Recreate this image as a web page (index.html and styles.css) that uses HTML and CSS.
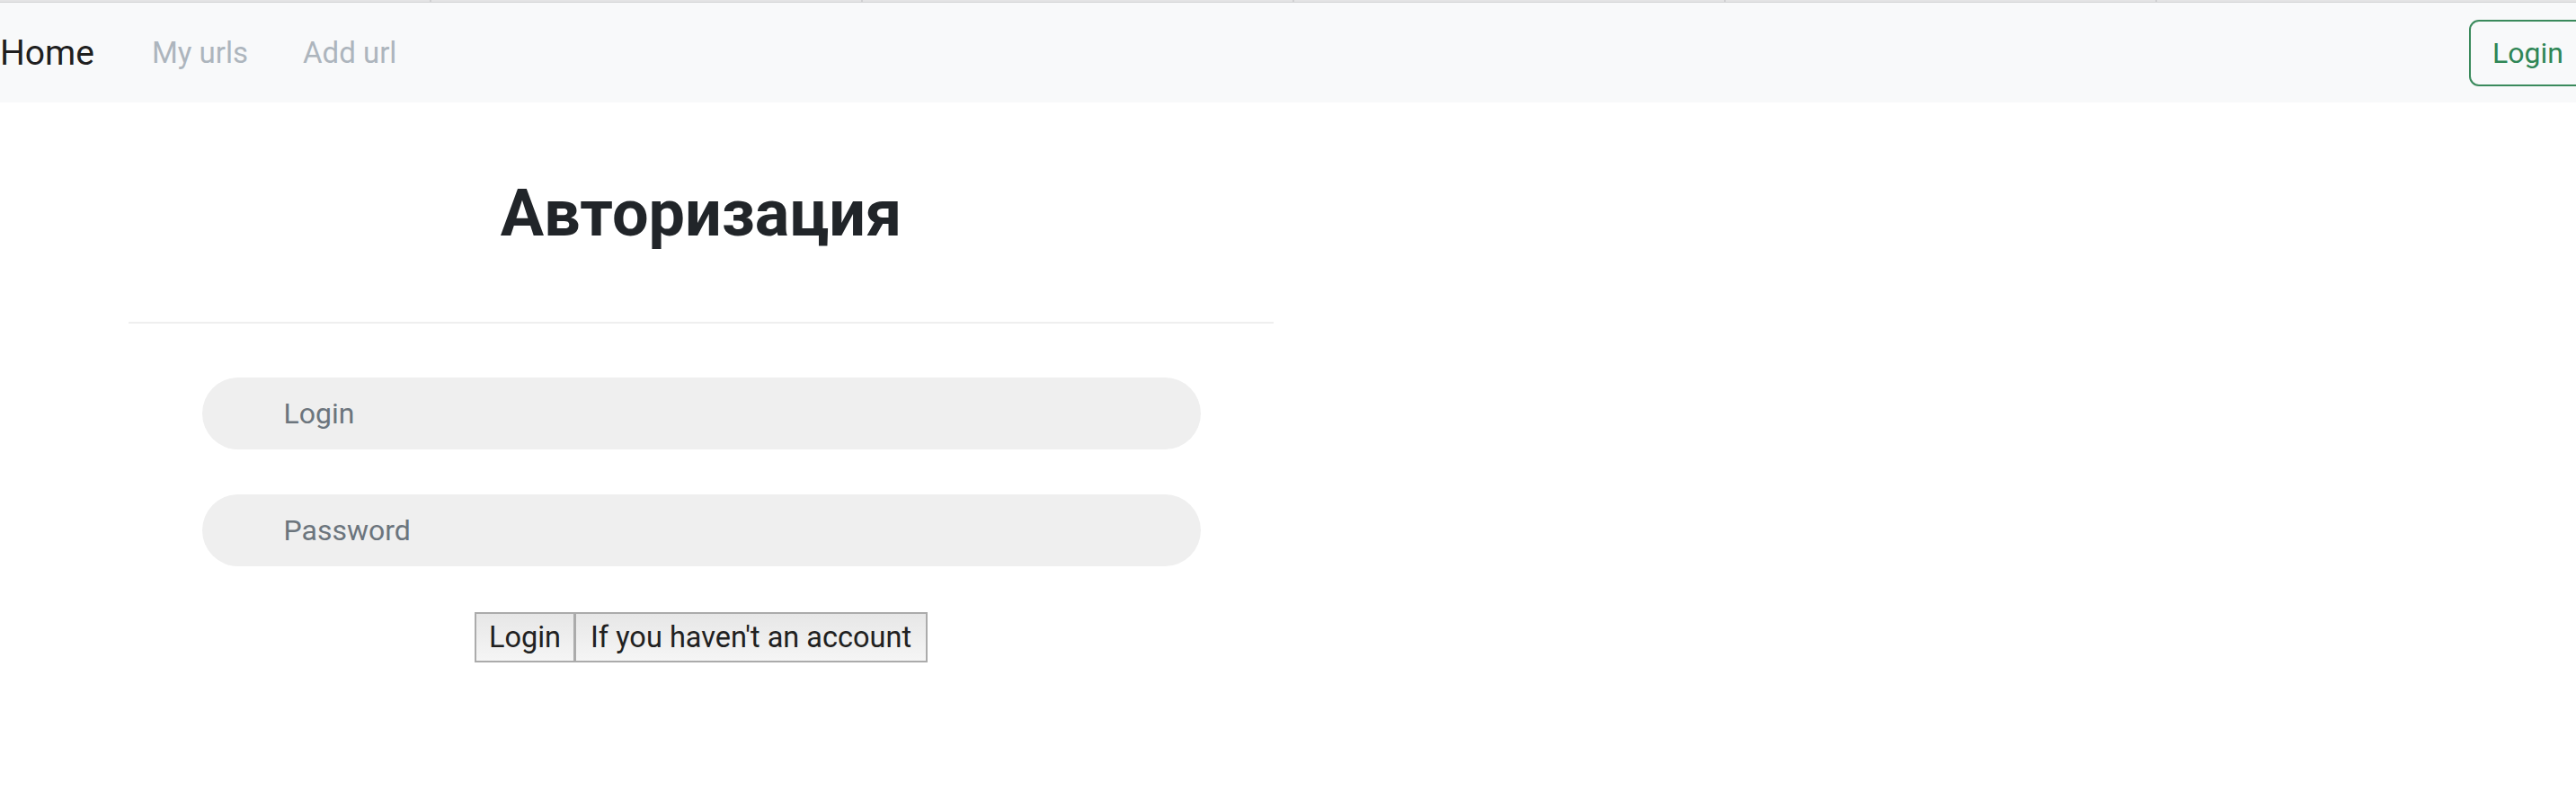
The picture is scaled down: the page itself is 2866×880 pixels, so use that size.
FILE: index.html
```html
<!DOCTYPE html>
<html lang="ru">
<head>
<meta charset="utf-8">
<title>Авторизация</title>
<link rel="stylesheet" href="styles.css">
</head>
<body>
<div class="tabstrip">
  <span class="tab"></span><span class="tab"></span><span class="tab"></span><span class="tab"></span><span class="tab"></span><span class="tab"></span>
</div>
<nav class="navbar">
  <a class="brand" href="#">Home</a>
  <a class="nav-link" href="#">My urls</a>
  <a class="nav-link" href="#">Add url</a>
  <button class="btn-outline" type="button">Login</button>
</nav>
<main class="auth">
  <h1 class="title">Авторизация</h1>
  <hr class="rule">
  <form class="form">
    <input class="field" type="text" placeholder="Login">
    <input class="field" type="password" placeholder="Password">
    <div class="actions"><button class="btn" type="submit">Login</button><button class="btn" type="button">If you haven't an account</button></div>
  </form>
</main>
</body>
</html>
```

FILE: styles.css
```css
html, body {
  margin: 0;
  padding: 0;
  background: #fff;
  font-family: Roboto, "Liberation Sans", Arial, sans-serif;
  color: #212529;
}

.tabstrip {
  display: flex;
  height: 2px;
  background: #e4e4e5;
  border-bottom: 1px solid #d3d3d5;
  overflow: hidden;
}

.tab {
  flex: 0 0 478px;
  border-right: 2px solid #d0d0d2;
}

.navbar {
  display: flex;
  align-items: center;
  height: 111px;
  background: #f8f9fa;
  overflow: hidden;
}

.brand {
  font-size: 39px;
  color: rgba(0, 0, 0, 0.9);
  text-decoration: none;
  margin-right: 64px;
}

.nav-link {
  font-size: 33px;
  color: #adb5bd;
  text-decoration: none;
  margin-right: 61px;
}

.btn-outline {
  margin-left: auto;
  margin-right: -12px;
  height: 74px;
  padding: 0 24px;
  font-family: inherit;
  font-size: 32px;
  color: #2f8656;
  background: transparent;
  border: 2px solid #3a8a5c;
  border-radius: 11px;
}

.auth {
  width: 1274px;
  margin-left: 143px;
}

.title {
  margin: 82px 0 0;
  font-size: 72px;
  line-height: 84px;
  font-weight: 700;
  text-align: center;
  color: #212529;
}

.rule {
  margin: 78px 0 0;
  border: 0;
  height: 2px;
  background: #efefef;
}

.form {
  display: flex;
  flex-direction: column;
  align-items: center;
  padding-top: 60px;
}

.field {
  box-sizing: border-box;
  width: 1111px;
  height: 80px;
  margin: 0 0 50px;
  padding: 0 0 0 91px;
  border: 0;
  border-radius: 40px;
  background: #efefef;
  font-family: inherit;
  font-size: 32px;
  color: #212529;
  outline: none;
}

.field::placeholder {
  color: #6c757d;
}

.actions {
  display: flex;
  margin-top: 1px;
}

.btn {
  box-sizing: border-box;
  height: 56px;
  padding: 0 14px;
  font-family: inherit;
  font-size: 32.5px;
  color: #212121;
  background: linear-gradient(#e7e7e7, #f5f5f5);
  border: 2px solid #ababab;
  border-radius: 0;
}

.btn + .btn {
  padding: 0 16px;
  border-left-width: 1px;
}
```
